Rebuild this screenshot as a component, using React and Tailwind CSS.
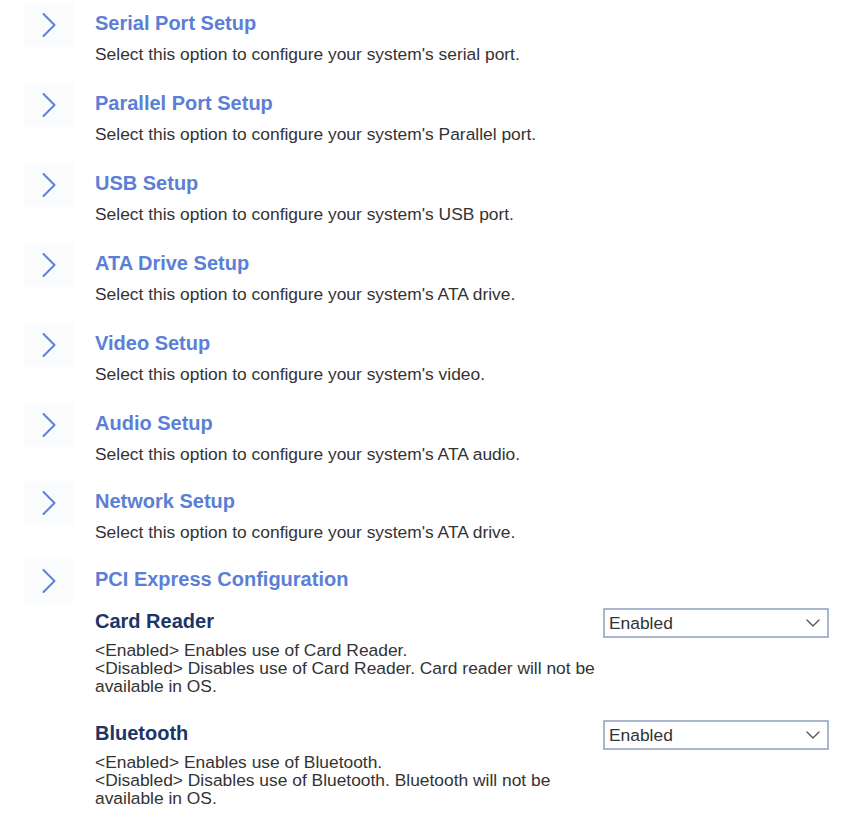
import React from "react";

const items = [
  { t: "Serial Port Setup", d: "Select this option to configure your system's serial port.", gap: "mb-[19px]" },
  { t: "Parallel Port Setup", d: "Select this option to configure your system's Parallel port.", gap: "mb-[19px]" },
  { t: "USB Setup", d: "Select this option to configure your system's USB port.", gap: "mb-[19px]" },
  { t: "ATA Drive Setup", d: "Select this option to configure your system's ATA drive.", gap: "mb-[19px]" },
  { t: "Video Setup", d: "Select this option to configure your system's video.", gap: "mb-[19px]" },
  { t: "Audio Setup", d: "Select this option to configure your system's ATA audio.", gap: "mb-[17px]" },
  { t: "Network Setup", d: "Select this option to configure your system's ATA drive.", gap: "mb-[17px]" },
];

function Chevron() {
  return (
    <div className="w-[50px] h-[44px] bg-[#fafbfc] flex items-center justify-center shrink-0">
      <svg width="16" height="26" viewBox="0 0 16 26" fill="none">
        <path d="M2.5 2 L13.5 13 L2.5 24" stroke="#5b80d8" strokeWidth="2" strokeLinecap="round" strokeLinejoin="round" />
      </svg>
    </div>
  );
}

function Select() {
  return (
    <div className="w-[226px] h-[30px] border-2 border-[#a9b6cf] bg-white flex items-center justify-between pl-[4px] pr-[7px] text-[17.4px] leading-[20px] text-[#333] shrink-0">
      <span>Enabled</span>
      <svg width="14" height="8" viewBox="0 0 14 8" fill="none">
        <path d="M1 1 L7 7 L13 1" stroke="#555" strokeWidth="1.4" strokeLinecap="round" strokeLinejoin="round" />
      </svg>
    </div>
  );
}

function Option({ title, lines, className }) {
  return (
    <div className={"flex items-start justify-between pl-[95px] pr-[21px] " + className}>
      <div>
        <div className="text-[20px] leading-[24px] font-bold text-[#1c3565]">{title}</div>
        <div className="mt-[8px] text-[17.4px] leading-[18px] text-[#333] w-[508px]">
          {lines.map((l, i) => (
            <div key={i}>{l}</div>
          ))}
        </div>
      </div>
      <div className="mt-[-1px]">
        <Select />
      </div>
    </div>
  );
}

export default function App() {
  return (
    <div className="w-[850px] h-[828px] bg-white overflow-hidden pt-[3px]" style={{ fontFamily: '"Liberation Sans", Arial, sans-serif' }}>
      {items.map((it) => (
        <div key={it.t} className={"flex items-start pl-[24px] " + it.gap}>
          <Chevron />
          <div className="ml-[21px] pt-[8px]">
            <div className="text-[20px] leading-[24px] font-bold text-[#5b7fd6]">{it.t}</div>
            <div className="mt-[9px] text-[17.4px] leading-[20px] text-[#333]">{it.d}</div>
          </div>
        </div>
      ))}
      <div className="flex items-start pl-[24px]">
        <Chevron />
        <div className="ml-[21px] pt-[8px]">
          <div className="text-[20px] leading-[24px] font-bold text-[#5b7fd6]">PCI Express Configuration</div>
        </div>
      </div>
      <Option
        className="mt-[6px]"
        title="Card Reader"
        lines={["<Enabled> Enables use of Card Reader.", "<Disabled> Disables use of Card Reader. Card reader will not be", "available in OS."]}
      />
      <Option
        className="mt-[26px]"
        title="Bluetooth"
        lines={["<Enabled> Enables use of Bluetooth.", "<Disabled> Disables use of Bluetooth. Bluetooth will not be", "available in OS."]}
      />
    </div>
  );
}
